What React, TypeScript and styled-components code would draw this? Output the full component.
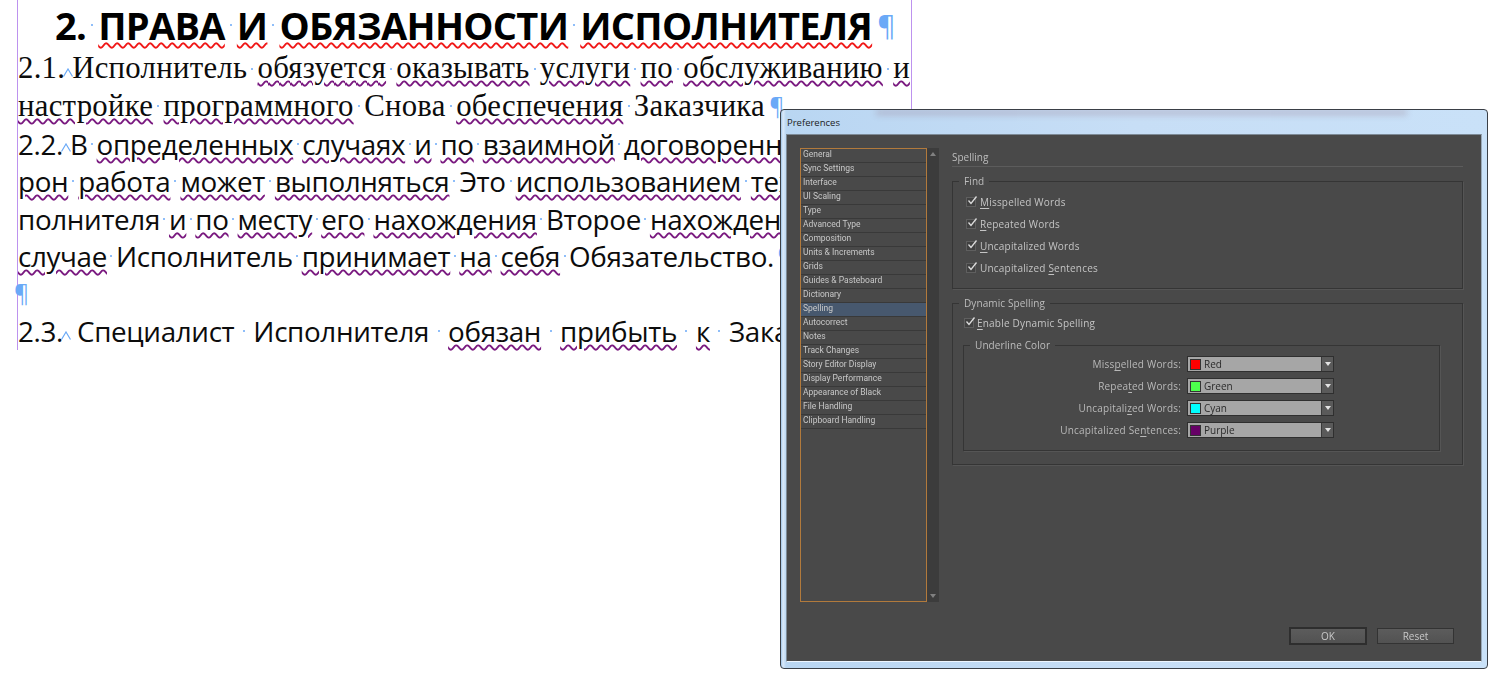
import React, {FC} from "react";
import styled, {createGlobalStyle} from "styled-components";

const GlobalStyle = createGlobalStyle`
  html, body {
    margin: 0;
    padding: 0;
    background: white;
  }
  body {
    width: 1500px;
    height: 676px;
    overflow: hidden;
    position: relative;
  }
`

const Page = styled.div`
  width: 1500px;
  height: 676px;
  position: relative;
  font-family: "Open Sans", sans-serif;
`

const TextFrame = styled.div`
  width: 895px;
  height: 350px;
  margin-left: 17px;
  box-sizing: border-box;
  border-left: 1px solid #bd92ee;
  border-right: 1px solid #bd92ee;
  color: #0c0c0c;
`

const Heading = styled.div`
  display: flex;
  align-items: center;
  gap: 5px;
  height: 50px;
  padding-left: 37px;
  font-weight: 700;
  font-size: 38px;
  letter-spacing: -0.7px;
  line-height: 50px;
  white-space: nowrap;
  color: #000;
`

const Line = styled.div<{ $serif?: boolean; $spread?: boolean; $gap?: number }>`
  display: flex;
  align-items: center;
  height: 37.5px;
  white-space: nowrap;
  font-family: ${props => props.$serif ? `"Liberation Serif", serif` : `"Open Sans", sans-serif`};
  font-size: ${props => props.$serif ? "30.8px" : "27.8px"};
  letter-spacing: ${props => props.$serif ? "0.25px" : "-0.35px"};
  justify-content: ${props => props.$spread ? "space-between" : "flex-start"};
  gap: ${props => props.$gap ? `${props.$gap}px` : "0"};
  padding-right: 1px;
`

const Word = styled.span<{ $mark?: string }>`
  ${props => props.$mark && `
    text-decoration: underline wavy ${props.$mark};
    text-decoration-thickness: 1.8px;
    text-underline-offset: 2px;
  `}
`

const Dot = styled.span`
  width: 2px;
  height: 2px;
  border-radius: 50%;
  background: #6aa9f7;
  flex: none;
`

const Pilcrow = styled.span<{ $size?: number }>`
  color: #6aa9f7;
  font-family: "Open Sans", sans-serif;
  font-weight: 400;
  font-size: ${props => props.$size || 23}px;
  letter-spacing: 0;
  line-height: 1;
`

const EmptyLine = styled.div`
  height: 37.5px;
  margin-left: -4px;
  display: flex;
  align-items: center;
`

const Caret = styled.svg<{ $after?: number }>`
  width: 10px;
  height: 9px;
  flex: none;
  margin: 8px ${props => props.$after ?? -1}px 0 -2px;
`

const Lead = styled.span`
  display: inline-flex;
  align-items: center;
`

const IndentMark: FC<{ after?: number }> = ({after}) => (
  <Caret viewBox="0 0 10 9" $after={after}>
    <polyline points="0.5,8.5 5,1 9.5,8.5" fill="none" stroke="#6aa9f7" strokeWidth="1.2" />
  </Caret>
)

type W = [string, boolean?]

const PURPLE = "#7a1a80"
const RED = "#f01818"

const Words: FC<{ words: W[]; mark?: string }> = ({words, mark = PURPLE}) => (
  <>
    {words.map(([text, wrong], index) => (
      <React.Fragment key={`${text}-${index}`}>
        {index > 0 && <Dot />}
        <Word $mark={wrong ? mark : undefined}>{text}</Word>
      </React.Fragment>
    ))}
  </>
)

// Dialog

const Dialog = styled.div`
  position: absolute;
  left: 780px;
  top: 109px;
  width: 708px;
  height: 560px;
  box-sizing: border-box;
  border: 1px solid #3a3f46;
  border-radius: 4px;
  background: linear-gradient(90deg, #9fc4e8 0, #dbeafa 2px, #b9d6f2 5px, #c7def6 50%, #c9e1f8 100%);
  display: flex;
  flex-direction: column;
  padding: 0 5px 6px 5px;
  font-family: "Open Sans", sans-serif;
  overflow: hidden;

  &::before {
    content: "";
    position: absolute;
    left: 95px;
    right: 80px;
    top: 0;
    height: 5px;
    background: #a08a9c;
    filter: blur(3px);
    opacity: 0.45;
  }
`

const TitleBar = styled.div`
  height: 24px;
  display: flex;
  align-items: center;
  padding: 0 1px;
  font-size: 9.5px;
  color: #1c1c1c;
  position: relative;
`

const Client = styled.div`
  flex: 1;
  background: #494949;
  border: 1px solid #7d8a96;
  border-bottom-color: #eef6ff;
  border-right-color: #98a8b8;
  display: flex;
  flex-direction: column;
  filter: blur(0.25px);
`

const Body = styled.div`
  display: flex;
  gap: 13px;
  padding: 13px 0 0 13px;
`

const ListWrap = styled.div`
  display: flex;
  height: 454px;
  width: 139px;
  flex: none;
`

const List = styled.div`
  width: 127px;
  box-sizing: border-box;
  border: 1px solid #b27a3c;
`

const ListItem = styled.div<{ $active?: boolean }>`
  height: 14px;
  box-sizing: border-box;
  padding-left: 2px;
  font-family: Roboto, sans-serif;
  font-size: 8.5px;
  line-height: 10px;
  color: #c8c8c8;
  white-space: nowrap;
  background: ${props => props.$active ? "#47586e" : "transparent"};
  border-bottom: 1px solid #393939;
`

const ScrollTrack = styled.div`
  width: 12px;
  background: #3c3c3c;
  display: flex;
  flex-direction: column;
  justify-content: space-between;
  align-items: center;
  padding: 4px 0;
`

const Arrow = styled.div<{ $up?: boolean; $color?: string }>`
  width: 0;
  height: 0;
  border-left: 3px solid transparent;
  border-right: 3px solid transparent;
  ${props => props.$up
    ? `border-bottom: 4px solid ${props.$color || "#808080"};`
    : `border-top: 4px solid ${props.$color || "#808080"};`}
`

const Pane = styled.div`
  width: 511px;
  flex: none;
`

const PaneTitle = styled.div`
  height: 19px;
  box-sizing: border-box;
  border-bottom: 1px solid #5c5c5c;
  font-size: 10px;
  line-height: 18px;
  color: #bdbdbd;
`

const Group = styled.fieldset<{ $mt: number; $pad: string }>`
  margin: ${props => props.$mt}px 0 0 0;
  padding: ${props => props.$pad};
  border: 1px solid #353535;
  min-width: 0;
  box-shadow: 1px 1px 0 #555;
`

const Legend = styled.legend`
  margin-left: 6px;
  padding: 0 5px;
  font-size: 10px;
  line-height: 12px;
  color: #bdbdbd;
  letter-spacing: 0.1px;
`

const DynamicBody = styled.div`
  padding: 0 22px 0 10px;
`

const CheckRow = styled.label<{ $indent: number; $gap: number }>`
  display: flex;
  align-items: center;
  height: 22px;
  padding-left: ${props => props.$indent}px;
  gap: ${props => props.$gap}px;
  font-size: 10px;
  color: #c4c4c4;
  letter-spacing: 0.2px;
`

const Box = styled.span`
  width: 10px;
  height: 10px;
  box-sizing: border-box;
  border: 1px solid #5f5f5f;
  background: #414141;
  position: relative;
  flex: none;
`

const Tick = styled.svg`
  position: absolute;
  left: 0;
  top: -3px;
  width: 11px;
  height: 11px;
`

const Checkbox: FC = () => (
  <Box>
    <Tick viewBox="0 0 11 11">
      <polyline points="1.5,5.5 4,8.5 9.5,1.5" fill="none" stroke="#dcdcdc" strokeWidth="1.3" />
    </Tick>
  </Box>
)

const Key = styled.span`
  text-decoration: underline;
  text-underline-offset: 2px;
`

const ColorRow = styled.div`
  display: grid;
  grid-template-columns: 217px 147px;
  column-gap: 6px;
  align-items: center;
  height: 22px;
`

const RowLabel = styled.span`
  text-align: right;
  font-size: 10px;
  color: #b9b9b9;
  letter-spacing: 0.2px;
`

const Select = styled.div`
  height: 16px;
  box-sizing: border-box;
  border: 1px solid #2f2f2f;
  background: #a6a6a6;
  display: flex;
  align-items: center;
  padding-left: 2px;
  gap: 3px;
  font-size: 10px;
  color: #2b2b2b;
`

const Swatch = styled.span<{ $color: string }>`
  width: 11px;
  height: 11px;
  box-sizing: border-box;
  border: 1px solid #333;
  background: ${props => props.$color};
  flex: none;
`

const SelectValue = styled.span`
  flex: 1;
`

const SelectArrow = styled.span`
  width: 11px;
  height: 14px;
  background: #5a5a5a;
  border-left: 1px solid #3a3a3a;
  display: flex;
  align-items: center;
  justify-content: center;
`

const Footer = styled.div`
  margin-top: auto;
  display: flex;
  justify-content: flex-end;
  align-items: center;
  gap: 10px;
  padding: 0 27px 16px 0;
`

const Button = styled.button<{ $primary?: boolean }>`
  width: ${props => props.$primary ? "78px" : "77px"};
  height: ${props => props.$primary ? "18px" : "16px"};
  box-sizing: border-box;
  border: ${props => props.$primary ? "2px solid #2e2e2e" : "1px solid #333"};
  background: linear-gradient(#5c5c5c, #525252);
  color: #c8c8c8;
  font-family: "Open Sans", sans-serif;
  font-size: 10px;
  padding: 0;
`

const sections = [
  "General", "Sync Settings", "Interface", "UI Scaling", "Type", "Advanced Type", "Composition",
  "Units & Increments", "Grids", "Guides & Pasteboard", "Dictionary", "Spelling", "Autocorrect",
  "Notes", "Track Changes", "Story Editor Display", "Display Performance", "Appearance of Black",
  "File Handling", "Clipboard Handling",
]

const underlineColors = [
  {label: <>Miss<Key>p</Key>elled Words:</>, name: "Red", color: "#ff0000"},
  {label: <>Repea<Key>t</Key>ed Words:</>, name: "Green", color: "#4dff4d"},
  {label: <>Uncapitali<Key>z</Key>ed Words:</>, name: "Cyan", color: "#00ffff"},
  {label: <>Uncapitalized Se<Key>n</Key>tences:</>, name: "Purple", color: "#660066"},
]

const findOptions = [
  <><Key>M</Key>isspelled Words</>,
  <><Key>R</Key>epeated Words</>,
  <><Key>U</Key>ncapitalized Words</>,
  <>Uncapitalized <Key>S</Key>entences</>,
]

const App: FC = () => {
  return (
    <Page>
      <GlobalStyle />
      <TextFrame>
        <Heading>
          <Words mark={RED} words={[["2."], ["ПРАВА", true], ["И", true], ["ОБЯЗАННОСТИ", true], ["ИСПОЛНИТЕЛЯ", true]]} />
          <Pilcrow $size={28}>¶</Pilcrow>
        </Heading>
        <Line $serif $spread>
          <Lead>2.1.<IndentMark />Исполнитель</Lead>
          <Dot />
          <Words words={[["обязуется", true], ["оказывать", true], ["услуги", true], ["по", true], ["обслуживанию", true], ["и", true]]} />
        </Line>
        <Line $serif $gap={4.25}>
          <Words words={[["настройке", true], ["программного", true], ["Снова"], ["обеспечения", true], ["Заказчика"]]} />
          <Pilcrow>¶</Pilcrow>
        </Line>
        <Line $gap={3.5}>
          <Lead>2.2.<IndentMark />В</Lead>
          <Dot />
          <Words words={[["определенных", true], ["случаях", true], ["и", true], ["по", true], ["взаимной", true], ["договоренн", true]]} />
        </Line>
        <Line $gap={4}>
          <Words words={[["рон", true], ["работа", true], ["может", true], ["выполняться", true], ["Это"], ["использованием", true], ["тех", true]]} />
        </Line>
        <Line $gap={3.5}>
          <Words words={[["полнителя"], ["и", true], ["по", true], ["месту", true], ["его", true], ["нахождения", true], ["Второе"], ["нахожден", true]]} />
        </Line>
        <Line $gap={3.5}>
          <Words words={[["случае", true], ["Исполнитель"], ["принимает", true], ["на", true], ["себя", true], ["Обязательство."]]} />
          <Pilcrow>¶</Pilcrow>
        </Line>
        <EmptyLine><Pilcrow>¶</Pilcrow></EmptyLine>
        <Line $gap={8.5}>
          <Lead>2.3.<IndentMark after={6} />Специалист</Lead>
          <Dot />
          <Words words={[["Исполнителя"], ["обязан", true], ["прибыть", true], ["к", true], ["Зака"]]} />
        </Line>
      </TextFrame>

      <Dialog>
        <TitleBar>Preferences</TitleBar>
        <Client>
          <Body>
            <ListWrap>
              <List>
                {sections.map(name => (
                  <ListItem key={name} $active={name === "Spelling"}>{name}</ListItem>
                ))}
              </List>
              <ScrollTrack>
                <Arrow $up />
                <Arrow />
              </ScrollTrack>
            </ListWrap>
            <Pane>
              <PaneTitle>Spelling</PaneTitle>
              <Group $mt={8} $pad="4px 0 9px 0">
                <Legend>Find</Legend>
                {findOptions.map((label, index) => (
                  <CheckRow key={`find-${index}`} $indent={13} $gap={4}>
                    <Checkbox />
                    <span>{label}</span>
                  </CheckRow>
                ))}
              </Group>
              <Group $mt={8} $pad="3px 0 13px 0">
                <Legend>Dynamic Spelling</Legend>
                <DynamicBody>
                  <CheckRow $indent={1} $gap={3}>
                    <Checkbox />
                    <span><Key>E</Key>nable Dynamic Spelling</span>
                  </CheckRow>
                  <Group $mt={5} $pad="2px 0 9px 0">
                    <Legend>Underline Color</Legend>
                    {underlineColors.map(row => (
                      <ColorRow key={row.name}>
                        <RowLabel>{row.label}</RowLabel>
                        <Select>
                          <Swatch $color={row.color} />
                          <SelectValue>{row.name}</SelectValue>
                          <SelectArrow><Arrow $color="#e4e4e4" /></SelectArrow>
                        </Select>
                      </ColorRow>
                    ))}
                  </Group>
                </DynamicBody>
              </Group>
            </Pane>
          </Body>
          <Footer>
            <Button $primary>OK</Button>
            <Button>Reset</Button>
          </Footer>
        </Client>
      </Dialog>
    </Page>
  )
}

export default App;
